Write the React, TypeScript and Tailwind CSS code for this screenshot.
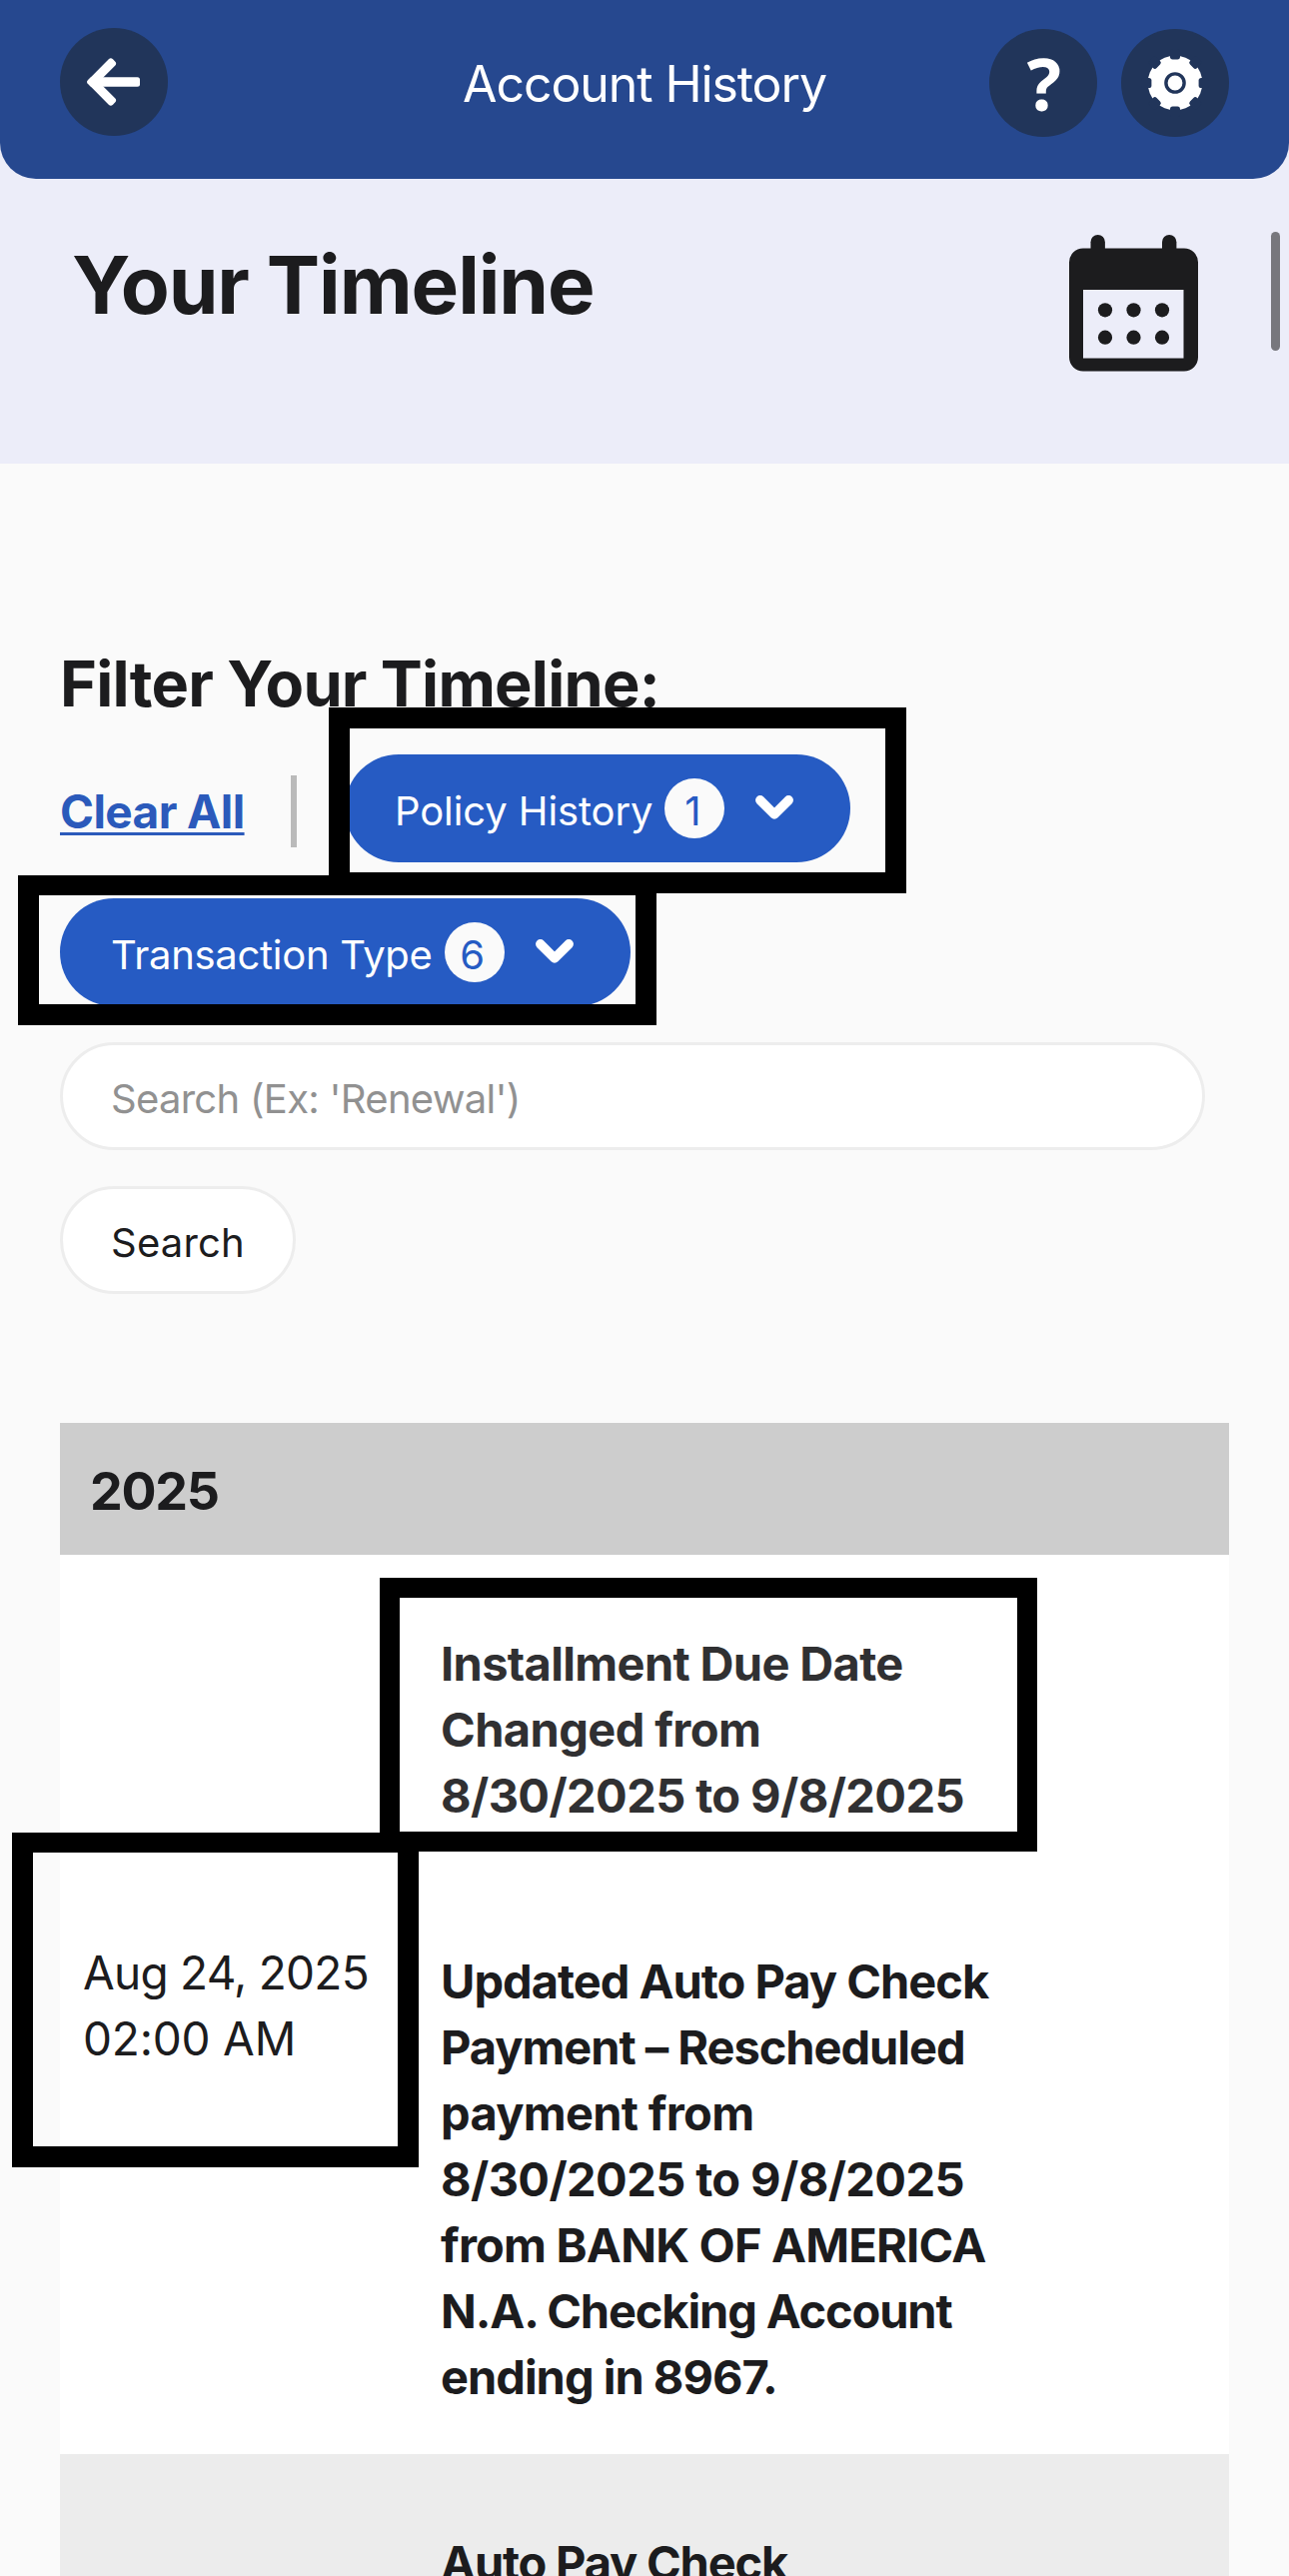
import type { ReactNode } from "react";

function BackIcon() {
  return (
    <svg viewBox="0 0 108 108" className="h-[108px] w-[108px]" fill="#fff">
      <rect x="28" y="49.500" width="35" height="9" rx="3" transform="rotate(-45 32.5 54)" />
      <rect x="28" y="49.500" width="35" height="9" rx="3" transform="rotate(45 32.5 54)" />
      <rect x="31" y="49.200" width="49" height="9.600" rx="2.5" />
    </svg>
  );
}

function GearIcon() {
  return (
    <svg viewBox="-54 -54 108 108" className="h-[108px] w-[108px]">
      <circle r="27.3" fill="#fff" />
      {[0, 45, 90, 135, 180, 225, 270, 315].map((a) => (
        <rect key={a} x="-5" y="-34" width="10" height="10.4" rx="2.6" fill="#21355a" transform={`rotate(${a})`} />
      ))}
      <circle r="9.1" fill="#fff" stroke="#21355a" strokeWidth="3.4" />
    </svg>
  );
}

function CalendarIcon() {
  return (
    <svg viewBox="0 0 129 137" className="h-[137px] w-[129px]" fill="#1c1c1e">
      <rect x="21.5" y="0" width="14.4" height="24" rx="7.2" />
      <rect x="93" y="0" width="14.4" height="24" rx="7.2" />
      <path
        fillRule="evenodd"
        d="M14 13.5h101a14 14 0 0 1 14 14v95a14 14 0 0 1-14 14H14a14 14 0 0 1-14-14v-95a14 14 0 0 1 14-14zM14 55v68.500h100.500V55z"
      />
      {[36, 64.5, 93].map((x) =>
        [75.3, 102.7].map((y) => <circle key={`${x}-${y}`} cx={x} cy={y} r="7.1" />)
      )}
    </svg>
  );
}

function Chevron() {
  return (
    <svg
      viewBox="0 0 38 25"
      className="mb-[2px] ml-[31px] h-[25px] w-[38px]"
      fill="none"
      stroke="#fff"
      strokeWidth="9.5"
      strokeLinecap="round"
      strokeLinejoin="round"
    >
      <path d="M4.800 4.800L19 19L33.200 4.800" />
    </svg>
  );
}

function FilterPill({ label, count, className }: { label: string; count: number; className: string }) {
  return (
    <button className={`flex h-[108px] items-center rounded-full bg-[#265bc3] text-[40px] text-white ${className}`}>
      <span className="pt-[5px] whitespace-nowrap">{label}</span>
      <span className="ml-[12px] flex h-[60px] w-[60px] items-center justify-center rounded-full bg-[#fafafa] pt-[5px] pr-[4px] tracking-normal text-[#265bc3]">
        {count}
      </span>
      <Chevron />
    </button>
  );
}

function Line({ className, children }: { className: string; children: ReactNode }) {
  return <span className={`block whitespace-nowrap ${className}`}>{children}</span>;
}

export default function App() {
  return (
    <div className="relative h-[2578px] w-[1290px] overflow-hidden bg-[#fafafa] font-['Inter',sans-serif] text-[#1c1c1e]">
      <div className="h-[464px] bg-[#ecedf9]">
        <header className="grid h-[179px] grid-cols-[1fr_auto_1fr] rounded-b-[36px] bg-[#26488f] px-[60px] pt-[28px]">
          <button className="h-[108px] w-[108px] rounded-full bg-[#21355a]">
            <BackIcon />
          </button>
          <h1 className="text-[50px] leading-[112px] tracking-[-1.1px] text-white">Account History</h1>
          <div className="mt-px flex gap-6 justify-self-end">
            <button className="h-[108px] w-[108px] rounded-full bg-[#21355a] pl-[2px] font-['Open_Sans',sans-serif] text-[72px] leading-[105px] font-bold text-white">
              ?
            </button>
            <button className="h-[108px] w-[108px] rounded-full bg-[#21355a]">
              <GearIcon />
            </button>
          </div>
        </header>
        <div className="flex justify-between pt-[56px] pr-[91px] pl-[72px]">
          <h2 className="mt-[2px] text-[80px] leading-[96px] font-bold tracking-[-1.08px]">Your Timeline</h2>
          <CalendarIcon />
        </div>
      </div>

      <main className="px-[60px] pt-[182px]">
        <h3 className="text-[63px] leading-[76px] font-bold tracking-[-0.78px]">Filter Your Timeline:</h3>
        <div className="mt-[33px] flex items-center">
          <a className="w-[185px] pt-[6px] text-[46px] font-bold tracking-[-0.6px] whitespace-nowrap text-[#2b5abb] underline decoration-[3px] underline-offset-[4px]">
            Clear All
          </a>
          <div className="mt-[6px] ml-[46px] h-[72px] w-[6px] bg-[#bababa]" />
          <FilterPill label="Policy History" count={1} className="ml-[48px] w-[506px] pl-[50px] tracking-[-0.1px]" />
        </div>
        <FilterPill label="Transaction Type" count={6} className="mt-[36px] w-[571px] pl-[51px] tracking-[-0.3px]" />
        <input
          className="mt-[36px] block h-[108px] w-[1146px] rounded-full border-[3px] border-[#ededed] bg-white pt-[5px] pl-[48px] text-[40px] tracking-[-0.72px] placeholder:text-[#919191] placeholder:opacity-100"
          placeholder="Search (Ex: 'Renewal')"
        />
        <button className="mt-[36px] block h-[108px] w-[236px] rounded-full border-[3px] border-[#ededed] bg-white pt-[6px] text-[40px] tracking-[0.2px]">
          Search
        </button>

        <section className="mt-[129px]">
          <div className="flex h-[132px] items-center bg-[#cdcdcd] pt-[5px] pl-[30px] text-[52px] font-bold tracking-[-1.3px]">
            2025
          </div>
          <article className="grid h-[900px] grid-cols-[381px_1fr] bg-white leading-[66px]">
            <div className="pt-[385px] pl-[23px] text-[46px]">
              <Line className="tracking-[-0.75px]">Aug 24, 2025</Line>
              <Line className="tracking-[-0.2px]">02:00 AM</Line>
            </div>
            <div className="pt-[76px] text-[47px] font-bold">
              <p className="text-[#303032]">
                <Line className="tracking-[-0.66px]">Installment Due Date</Line>
                <Line className="tracking-[-0.6px]">Changed from</Line>
                <Line className="tracking-[-0.6px]">8/30/2025 to 9/8/2025</Line>
              </p>
              <p className="mt-[120px]">
                <Line className="tracking-[-1px]">Updated Auto Pay Check</Line>
                <Line className="tracking-[-1.05px]">Payment – Rescheduled</Line>
                <Line className="tracking-[-0.7px]">payment from</Line>
                <Line className="tracking-[-0.6px]">8/30/2025 to 9/8/2025</Line>
                <Line className="tracking-[-0.8px]">from BANK OF AMERICA</Line>
                <Line className="tracking-[-1.15px]">N.A. Checking Account</Line>
                <Line className="tracking-[-1px]">ending in 8967.</Line>
              </p>
            </div>
          </article>
          <article className="grid h-[300px] grid-cols-[381px_1fr] bg-[#ececec] leading-[66px]">
            <div />
            <p className="pt-[76px] text-[47px] font-bold">
              <Line className="tracking-[-1.2px]">Auto Pay Check</Line>
            </p>
          </article>
        </section>
      </main>

      {/* Scroll indicator */}
      <div className="absolute top-[232px] left-[1272px] h-[119px] w-[9px] rounded-full bg-[#77777d]" />

      {/* Highlight frames */}
      <div className="absolute top-[708px] left-[329px] h-[186px] w-[578px] border-[21px] border-black" />
      <div className="absolute top-[876px] left-[18px] h-[150px] w-[639px] border-x-[21px] border-t-[20px] border-b-[21px] border-black" />
      <div className="absolute top-[1579px] left-[380px] h-[274px] w-[658px] border-[20px] border-black" />
      <div className="absolute top-[1834px] left-[12px] h-[335px] w-[407px] border-x-[21px] border-t-[20px] border-b-[21px] border-black" />
    </div>
  );
}
